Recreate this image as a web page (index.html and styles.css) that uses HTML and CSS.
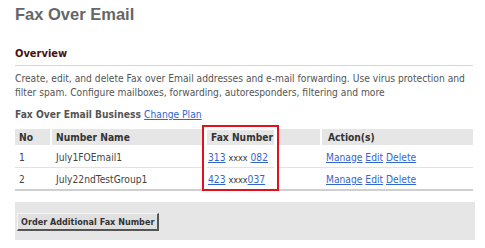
FILE: index.html
```html
<!DOCTYPE html>
<html lang="en">
<head>
  <meta charset="UTF-8">
  <title>Fax Over Email</title>
  <link rel="stylesheet" href="styles.css">
</head>
<body>

<div class="page">
  <h1>Fax Over Email</h1>

  <h2 class="section-title">Overview</h2>
  <p class="intro">
    Create, edit, and delete Fax over Email addresses and e-mail forwarding. Use virus protection
    and filter spam. Configure mailboxes, forwarding, autoresponders, filtering and more
  </p>

  <div class="plan">Fax Over Email Business <a href="#">Change Plan</a></div>

  <div class="table-wrap">
    <table class="numbers">
      <tr>
        <th class="col-no">No</th>
        <th class="col-name">Number Name</th>
        <th class="col-fax">Fax Number</th>
        <th class="col-actions">Action(s)</th>
      </tr>
      <tr>
        <td>1</td>
        <td>July1FOEmail1</td>
        <td><a href="#">313</a> <span class="mask">xxxx</span> <a href="#">082</a></td>
        <td class="actions"><a href="#">Manage</a> <a href="#">Edit</a> <a href="#">Delete</a></td>
      </tr>
      <tr class="last">
        <td>2</td>
        <td>July22ndTestGroup1</td>
        <td><a href="#">423</a> <span class="mask">xxxx</span><a href="#">037</a></td>
        <td class="actions"><a href="#">Manage</a> <a href="#">Edit</a> <a href="#">Delete</a></td>
      </tr>
    </table>
    <!-- highlight around fax column -->
    <div class="highlight"></div>
  </div>

  <div class="order-bar">
    <button class="order-button">Order Additional Fax Number</button>
  </div>
</div>

</body>
</html>
```

FILE: styles.css
```css
* {
  box-sizing: border-box;
}

body {
  margin: 0;
  font-family: "DejaVu Sans Condensed", "DejaVu Sans", Verdana, sans-serif;
  font-size: 10.2px;
  color: #555;
  background: #fff;
}

.page {
  width: 473px;
  padding-left: 15px;
}

h1 {
  margin: 0;
  padding-top: 3px;
  font-family: "Liberation Sans", Arial, sans-serif;
  font-size: 16.5px;
  line-height: 22px;
  font-weight: bold;
  color: #666;
}

.section-title {
  margin: 22px 0 0;
  padding-bottom: 4px;
  font-size: 11px;
  line-height: 14px;
  color: #4a0f0f;
  border-bottom: 1px solid #d6d6d6;
}

.intro {
  margin: 6px 0 0;
  line-height: 14px;
}

a {
  color: #3366cc;
  text-decoration: underline;
}

.plan {
  margin-top: 8px;
  font-weight: bold;
  line-height: 14px;
}

.plan a {
  font-weight: normal;
}

.table-wrap {
  position: relative;
  margin-top: 7px;
}

.numbers {
  width: 458px;
  border-collapse: separate;
  border-spacing: 0;
  table-layout: fixed;
}

.numbers th {
  height: 16px;
  padding: 0 4px;
  text-align: left;
  font-weight: bold;
  color: #333;
  background: #e6e6e6;
  border-right: 2px solid #fff;
}

.numbers th.col-fax {
  padding-left: 7px;
}

.numbers th.col-actions {
  padding-left: 6px;
  border-right: none;
}

.col-no { width: 37px; }
.col-name { width: 152px; }
.col-fax { width: 118px; }

.numbers td {
  height: 23px;
  padding: 2px 4px 0;
  color: #444;
  border-bottom: 1px solid #e2e2e2;
}

.numbers tr.last td {
  border-bottom: 2px solid #cfcfcf;
}

.mask {
  font-size: 9px;
  color: #333;
}

.highlight {
  position: absolute;
  left: 187px;
  top: -4px;
  width: 77px;
  height: 66px;
  border: 2px solid #e3101e;
  box-shadow: inset 0 0 0 3px #fff;
  pointer-events: none;
}

.order-bar {
  margin-top: 11px;
  width: 460px;
  height: 38px;
  padding: 11px 0 0 2px;
  background: #e6e6e6;
}

.order-button {
  height: 18px;
  padding: 0 3px;
  font-family: "DejaVu Sans Condensed", "DejaVu Sans", Verdana, sans-serif;
  font-size: 9px;
  font-weight: bold;
  color: #333;
  background: #e0e0e0;
  border: 1px solid;
  border-color: #f4f4f4 #555 #555 #f4f4f4;
  border-width: 1px 2px 2px 1px;
}
```
